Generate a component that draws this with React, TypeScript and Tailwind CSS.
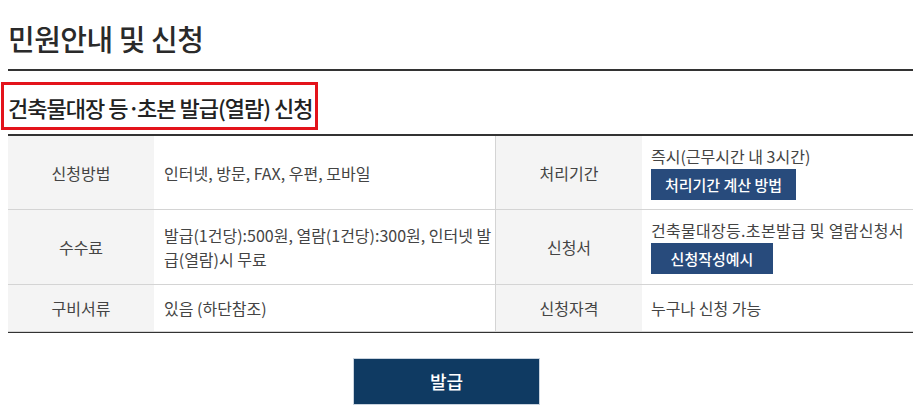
import React from 'react'

const font = { fontFamily: '"Noto Sans CJK KR", "Noto Sans", sans-serif' }

function Th({ children, border }: { children: React.ReactNode; border?: boolean }) {
  return (
    <div
      className={`bg-[#f4f4f4] flex items-center justify-center text-[16px] text-[#444] border-b border-[#d4d4d4] ${
        border ? 'border-l' : ''
      }`}
    >
      {children}
    </div>
  )
}

function Td({ children, className = '' }: { children: React.ReactNode; className?: string }) {
  return (
    <div className={`flex flex-col justify-center text-[16px] text-[#444] border-b border-[#d4d4d4] ${className}`}>
      {children}
    </div>
  )
}

function BlueBtn({ children, w }: { children: React.ReactNode; w: string }) {
  return (
    <button className={`mt-[3px] h-[31px] ${w} bg-[#284b7c] text-white text-[15px] font-medium leading-none`}>
      {children}
    </button>
  )
}

export default function App() {
  return (
    <div className="w-[921px] h-[416px] bg-white px-2 overflow-hidden" style={font}>
      <h2 className="pt-[21px] pb-[14px] text-[29px] leading-[34px] font-medium text-[#2a2a2a] tracking-[-0.5px] border-b-2 border-[#333]">
        민원안내 및 신청
      </h2>

      <div className="mt-[11px] -ml-[7px] w-[317px] h-[48px] border-[3px] border-[#e3131b] pl-[4px] flex items-center">
        <h3 className="text-[22px] font-medium text-[#222] tracking-[-1px] leading-none pt-[2px] whitespace-nowrap">
          건축물대장 등<span className="tracking-[-3px]">·</span>초본 발급(열람) 신청
        </h3>
      </div>

      <div className="mt-[4px] grid grid-cols-[146px_341px_147px_1fr] border-t-2 border-[#333] border-b border-b-[#333]">
        <Th>신청방법</Th>
        <Td className="h-[74px] pl-[10px]">인터넷, 방문, FAX, 우편, 모바일</Td>
        <Th border>처리기간</Th>
        <Td className="pl-[9px]">
          <span className="leading-[20px]">즉시(근무시간 내 3시간)</span>
          <BlueBtn w="w-[145px]">처리기간 계산 방법</BlueBtn>
        </Td>

        <Th>수수료</Th>
        <Td className="h-[75px] pl-[10px] pr-[3px] leading-[24px] break-all">
          <span>발급(1건당):500원, 열람(1건당):300원, 인터넷 발급(열람)시 무료</span>
        </Td>
        <Th border>신청서</Th>
        <Td className="pl-[9px]">
          <span className="leading-[20px] tracking-[0.3px] whitespace-nowrap">건축물대장등.초본발급 및 열람신청서</span>
          <BlueBtn w="w-[122px]">신청작성예시</BlueBtn>
        </Td>

        <Th>구비서류</Th>
        <Td className="h-[47px] pl-[10px]">있음 (하단참조)</Td>
        <Th border>신청자격</Th>
        <Td className="pl-[9px]">누구나 신청 가능</Td>
      </div>

      <div className="mt-[25px] flex pl-[345px]">
        <button className="w-[187px] h-[47px] bg-[#0f3a62] border border-[#c9d3de] text-white text-[18px] font-medium">
          발급
        </button>
      </div>
    </div>
  )
}
